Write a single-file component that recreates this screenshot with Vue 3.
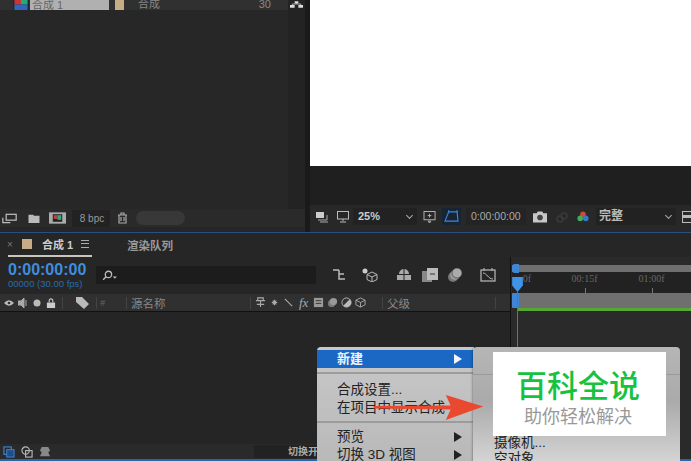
<script setup>
const columnIcons = [
  'M1 4h10M3 4V1h6v3M6 4v7M2 8h8',
  'M6 3v6M3 6h6M4 4l4 4M8 4l-4 4',
  'M2 2l8 8'
]
</script>

<template>
  <div class="app">
    <section class="top">
      <div class="project">
        <div class="project-main">
          <div class="project-list">
            <div class="asset-row">
              <svg class="comp-thumb" viewBox="0 0 14 10"><rect width="14" height="10" fill="#223"/><rect x="1" width="6" height="5" fill="#c33"/><rect x="7" width="6" height="5" fill="#2a7"/><rect x="1" y="5" width="12" height="5" fill="#36b"/></svg>
              <span class="asset-name">合成 1</span>
              <span class="swatch small"></span>
              <span class="asset-type">合成</span>
              <span class="asset-num">30</span>
            </div>
          </div>
          <div class="project-side">
            <svg class="flow" viewBox="0 0 14 8"><path d="M5 1h4v2.500H5zM0 5h5v3H0zM9 5h5v3H9z" fill="#ddd"/><path d="M2.500 5V4h9v1M7 3.500V4" stroke="#ddd" stroke-width=".8" fill="none"/></svg>
          </div>
        </div>
        <div class="project-foot">
          <svg class="foot-icon" viewBox="0 0 18 12"><rect x="5" y="1" width="12" height="7" fill="none" stroke="#bbb" stroke-width="1.500"/><path d="M1 5v6h9" fill="none" stroke="#bbb" stroke-width="1.500"/></svg>
          <svg class="foot-icon folder" viewBox="0 0 14 12"><path d="M1 2h5l1 1h6v8H1z" fill="#bbb"/></svg>
          <svg class="foot-icon wide" viewBox="0 0 18 12"><rect width="18" height="12" fill="#aaa"/><rect x="4" y="2" width="10" height="8" fill="#222"/><rect x="5" y="3" width="4" height="4" fill="#b44"/><rect x="9" y="3" width="4" height="5" fill="#3a7"/></svg>
          <span class="bpc">8 bpc</span>
          <svg class="trash" viewBox="0 0 11 12"><path d="M1 3h9M4 3V1h3v2M2 3v8h7V3M4 5v4M7 5v4" fill="none" stroke="#aaa" stroke-width="1.200"/></svg>
          <span class="pill"></span>
        </div>
      </div>
      <div class="viewer">
        <div class="canvas"></div>
        <div class="viewer-gap"></div>
        <div class="viewer-bar">
          <svg class="vb-icon first" viewBox="0 0 14 12"><rect x="1" y="1" width="8" height="6" fill="#ccc"/><path d="M3 9h9V4M5 11h8" stroke="#aaa" fill="none"/></svg>
          <svg class="vb-icon monitor" viewBox="0 0 14 12"><rect x="1.500" y=".5" width="11" height="7.500" fill="none" stroke="#bbb"/><path d="M7 8v2M4 11h6" stroke="#bbb"/></svg>
          <span class="zoom-select">25%<i class="chev"></i></span>
          <svg class="vb-icon region" viewBox="0 0 14 13"><rect x=".5" y=".5" width="12" height="9" fill="none" stroke="#bbb"/><path d="M6.500 3v4M4.500 5h4M5 11h3l-1.500 2z" stroke="#bbb" fill="none"/></svg>
          <span class="mask-btn"><svg viewBox="0 0 16 14"><path d="M5 2h9l1 10H1z" fill="none" stroke="#3f86d8" stroke-width="1.200"/><path d="M5 0v3M14 0v3" stroke="#3f86d8"/></svg></span>
          <span class="timecode">0:00:00:00</span>
          <svg class="vb-icon camera" viewBox="0 0 15 12"><path d="M0 2h4l1-2h5l1 2h4v10H0z" fill="#c8c8c8"/><circle cx="7.500" cy="6.500" r="3" fill="#444"/></svg>
          <svg class="vb-icon glasses" viewBox="0 0 14 12"><circle cx="5" cy="8" r="3" fill="none" stroke="#3a3a3a" stroke-width="1.500"/><circle cx="9" cy="5" r="3" fill="none" stroke="#3a3a3a" stroke-width="1.500"/></svg>
          <svg class="vb-icon colors" viewBox="0 0 14 13"><circle cx="7" cy="3.500" r="3" fill="#d04a3a"/><circle cx="4" cy="8" r="3" fill="#3fae5a"/><circle cx="10" cy="8" r="3" fill="#3a78d0"/></svg>
          <span class="quality">完整<i class="chev"></i></span>
          <span class="cut-icon"></span>
        </div>
      </div>
    </section>

    <div class="divider"></div>

    <section class="timeline">
      <div class="tabs">
        <div class="tab active">
          <span class="close">×</span>
          <span class="swatch"></span>
          <span class="tab-title">合成 1</span>
          <span class="burger"></span>
        </div>
        <div class="tab queue">渲染队列</div>
      </div>

      <div class="tl-body">
        <div class="tl-left">
          <div class="controls">
            <div class="time">
              <div class="time-main">0:00:00:00</div>
              <div class="time-sub">00000 (30.00 fps)</div>
            </div>
            <div class="search">
              <svg viewBox="0 0 16 10"><circle cx="7" cy="4" r="3" fill="none" stroke="#bbb" stroke-width="1.200"/><path d="M5 6l-3 3" stroke="#bbb" stroke-width="1.300"/><path d="M11 6h4l-2 2z" fill="#bbb"/></svg>
            </div>
            <div class="tools">
              <svg viewBox="0 0 16 14"><path d="M1 2h6M7 2v9h6M7 6h5" fill="none" stroke="#bbb" stroke-width="1.500"/></svg>
              <svg viewBox="0 0 16 14"><circle cx="3" cy="3" r="2.500" fill="#ccc"/><path d="M10 4l5 2.500v5L10 14l-5-2.500v-5zM5 6.500l5 2.500 5-2.500M10 9v5" fill="none" stroke="#bbb"/></svg>
              <svg viewBox="0 0 16 14"><path d="M3 6a5 5 0 0 1 10 0zM1 7h14v5H1z" fill="#aaa"/><path d="M8 1v11" stroke="#222"/></svg>
              <svg viewBox="0 0 16 14"><rect y="3" width="10" height="11" fill="#888"/><rect x="5" width="11" height="12" fill="#bbb"/><path d="M8 6h5" stroke="#333"/></svg>
              <svg viewBox="0 0 16 14"><circle cx="6" cy="9" r="5" fill="#777"/><circle cx="8" cy="7" r="5" fill="#999"/><circle cx="10" cy="5" r="5" fill="#aaa" stroke="#333" stroke-width=".6"/></svg>
              <svg viewBox="0 0 16 14"><rect x="1" y="2" width="14" height="11" fill="none" stroke="#bbb" stroke-width="1.200"/><path d="M4 0v3M12 0v3M3 5c4 0 5 6 10 6" fill="none" stroke="#bbb"/></svg>
            </div>
          </div>
          <div class="col-head">
            <span class="head-icons">
              <svg viewBox="0 0 11 8"><path d="M0 4q5.500-6 11 0q-5.500 6-11 0z" fill="#bbb"/><circle cx="5.500" cy="4" r="1.500" fill="#333"/></svg>
              <svg viewBox="0 0 10 10"><path d="M0 3h3l3-3v10L3 7H0zM8 2v6" fill="#aaa" stroke="#aaa"/></svg>
              <svg viewBox="0 0 10 10"><circle cx="5" cy="5" r="3.500" fill="#bbb"/></svg>
              <svg viewBox="0 0 9 11"><path d="M2.500 5V3a2 2 0 0 1 4 0v2" fill="none" stroke="#ccc" stroke-width="1.200"/><rect y="5" width="9" height="6" fill="#ccc"/></svg>
            </span>
            <span class="sep"></span>
            <span class="tag-cell"><svg viewBox="0 0 13 12"><path d="M0 0h6l7 7-5 5-8-7z" fill="#bbb"/></svg></span>
            <span class="sep"></span>
            <span class="hash">#</span>
            <span class="sep"></span>
            <span class="col-name">源名称</span>
            <span class="sep"></span>
            <span class="switches">
              <svg v-for="(d, i) in columnIcons" :key="i" viewBox="0 0 12 12"><path :d="d" fill="none" stroke="#aaa" stroke-width="1.200"/></svg>
              <em>fx</em>
              <svg viewBox="0 0 12 12"><rect x="1" y="1" width="10" height="10" fill="#999"/><path d="M3 4h6M3 7h6" stroke="#333"/></svg>
              <svg viewBox="0 0 12 12"><circle cx="5" cy="7" r="4" fill="#777"/><circle cx="7" cy="5" r="4" fill="#999"/></svg>
              <svg viewBox="0 0 12 12"><circle cx="6" cy="6" r="5" fill="#333" stroke="#bbb"/><path d="M6 1a5 5 0 0 1 0 10z" fill="#bbb" transform="rotate(45 6 6)"/></svg>
              <svg viewBox="0 0 12 12"><path d="M6 1l5 2.500v5L6 11 1 8.500v-5zM1 3.500L6 6l5-2.500M6 6v5" fill="none" stroke="#aaa"/></svg>
            </span>
            <span class="sep"></span>
            <span class="parent">父级</span>
            <span class="sep"></span>
            <span></span>
          </div>
          <div class="layers"></div>
          <div class="tl-foot">
            <svg viewBox="0 0 13 13"><rect x="1" y="1" width="8" height="8" fill="none" stroke="#3f86d8" stroke-width="1.200"/><rect x="4" y="4" width="8" height="8" fill="#1d4f86" stroke="#3f86d8"/></svg>
            <svg viewBox="0 0 13 13"><circle cx="5" cy="5" r="4" fill="none" stroke="#bbb" stroke-width="1.200"/><rect x="5" y="5" width="7" height="7" fill="none" stroke="#bbb" stroke-width="1.200"/></svg>
            <svg viewBox="0 0 13 13"><path d="M3 1h7l2 4-2 2 2 4H1l2-4-2-2z" fill="#888"/></svg>
            <span class="switch-mode">切换开</span>
          </div>
        </div>
        <div class="tl-right">
          <div class="range"><span class="range-handle"></span></div>
          <div class="ruler">
            <span class="tick first">0f</span>
            <span class="tick second">00:15f</span>
            <span class="tick">01:00f</span>
          </div>
          <div class="work"><span class="work-handle"></span></div>
          <div class="green"></div>
          <div class="track"></div>
          <svg class="head" viewBox="0 0 10 14"><path d="M0 0h10v8l-5 6-5-6z" fill="#3f93e8"/></svg>
          <span class="head-line"></span>
        </div>
      </div>
    </section>

    <div class="bottom-line"></div>

    <div class="menu">
      <div class="item selected">新建<i class="arrow white"></i></div>
      <div class="rule first-rule"></div>
      <div class="item">合成设置...</div>
      <div class="item">在项目中显示合成</div>
      <div class="rule"></div>
      <div class="item">预览<i class="arrow"></i></div>
      <div class="item">切换 3D 视图<i class="arrow"></i></div>
    </div>
    <div class="submenu">
      <div class="sub-rule"></div>
      <div class="sub-item first">摄像机...</div>
      <div class="sub-item">空对象</div>
    </div>
    <div class="brand">
      <div class="brand-title">百科全说</div>
      <div class="brand-sub">助你轻松解决</div>
    </div>
    <svg class="pointer" viewBox="0 0 114 26"><path d="M0 11.500L80 11 75 0l39 12-39 14 5-11L0 14z" fill="#e8492f"/></svg>
  </div>
</template>

<style>
html, body { margin: 0; background: #202020; }
</style>

<style scoped>
.app {
  position: relative;
  width: 691px;
  height: 461px;
  overflow: hidden;
  display: flex;
  flex-direction: column;
  background: #1c1c1c;
  color: #aaa;
  font-family: "Liberation Sans", "Noto Sans CJK SC", sans-serif;
}
svg { display: block; flex: none; }

.top { height: 232px; flex: none; display: flex; background: #1a1a1a; }
.project { width: 305px; flex: none; display: flex; flex-direction: column; background: #262626; }
.project-main { flex: 1; display: flex; min-height: 0; }
.project-list { flex: 1; background: #272727; }
.asset-row {
  height: 10px;
  display: flex;
  align-items: flex-end;
  background: #303030;
  overflow: hidden;
  font-size: 11px;
  line-height: 12px;
  color: #888;
}
.comp-thumb { width: 16px; height: 11px; margin-left: 13px; }
.asset-name { width: 79px; height: 11px; margin-left: 1px; padding-left: 2px; box-sizing: border-box; background: #b0b0b0; color: #666; white-space: nowrap; }
.swatch { width: 10px; height: 10px; background: #c7ad87; display: block; flex: none; }
.swatch.small { margin-left: 6px; width: 9px; }
.asset-type { margin-left: 14px; }
.asset-num { margin-left: auto; margin-right: 17px; }
.project-side { width: 17px; background: #232323; }
.flow { width: 13px; height: 8px; margin: 0 0 0 2px; }
.project-foot { height: 18px; margin-bottom: 5px; display: flex; align-items: center; background: #2a2a2a; padding-left: 2px; }
.foot-icon { width: 15px; height: 11px; }
.foot-icon.folder { width: 14px; margin-left: 10px; }
.foot-icon.wide { width: 17px; margin-left: 8px; height: 12px; }
.bpc { width: 38px; margin-left: 6px; padding-left: 2px; box-sizing: border-box; text-align: center; font-size: 10px; line-height: 17px; background: #222; color: #999; }
.trash { width: 11px; height: 12px; margin-left: 7px; }
.pill { width: 49px; height: 14px; margin-left: 8px; border-radius: 7px; background: #383838; }

.viewer { flex: 1; display: flex; flex-direction: column; margin-left: 5px; min-width: 0; background: #232323; }
.canvas { height: 166px; flex: none; background: #fff; }
.viewer-gap { height: 39px; flex: none; background: #1f1f1f; }
.viewer-bar { flex: 1; display: flex; align-items: center; background: #282828; padding: 0 0 4px 5px; overflow: hidden; font-size: 11px; }
.vb-icon { width: 14px; height: 12px; }
.vb-icon.monitor { margin-left: 7px; }
.zoom-select { width: 64px; height: 17px; margin-left: 3px; padding-left: 5px; box-sizing: border-box; flex: none; background: #222; color: #ccc; line-height: 17px; font-weight: 700; position: relative; }
.chev { position: absolute; right: 5px; top: 5px; width: 4px; height: 4px; border-right: 1px solid #aaa; border-bottom: 1px solid #aaa; transform: rotate(45deg); }
.vb-icon.region { margin-left: 6px; }
.mask-btn { width: 19px; height: 17px; margin-left: 5px; flex: none; display: flex; align-items: center; justify-content: center; background: #172434; }
.mask-btn svg { width: 15px; height: 13px; }
.timecode { width: 60px; margin-left: 5px; padding-left: 5px; box-sizing: border-box; flex: none; color: #aaa; line-height: 17px; background: #242424; font-size: 10.500px; white-space: nowrap; }
.vb-icon.camera { margin-left: 7px; }
.vb-icon.glasses { margin-left: 8px; }
.vb-icon.colors { margin-left: 7px; }
.quality { width: 80px; height: 17px; margin-left: 6px; padding-left: 3px; box-sizing: border-box; position: relative; flex: none; background: #222; color: #bbb; line-height: 17px; font-size: 12px; font-weight: 700; }
.cut-icon { width: 9px; height: 10px; margin-left: 6px; flex: none; border: 1px solid #bbb; background: linear-gradient(#2a2a2a 30%, #bbb 30%, #bbb 60%, #2a2a2a 60%); }

.divider { height: 1px; flex: none; background: #2a4f82; }
.timeline { flex: 1; min-height: 0; display: flex; flex-direction: column; background: #262626; }
.tabs { height: 24px; flex: none; display: flex; font-size: 11px; }
.tab { display: flex; align-items: center; height: 24px; box-sizing: border-box; }
.tab.active { width: 84px; margin-left: 8px; border-bottom: 2px solid #c9c5ba; color: #ccc; font-weight: 700; }
.close { font-size: 10px; color: #777; font-weight: 400; margin-left: -1px; width: 15px; }
.tab-title { margin: 0 8px 0 10px; white-space: nowrap; }
.burger { width: 8px; height: 6px; border-top: 1px solid #aaa; border-bottom: 1px solid #aaa; position: relative; }
.burger::after { content: ""; position: absolute; left: 0; right: 0; top: 2px; height: 1px; background: #aaa; }
.queue { margin-left: 35px; color: #999; font-size: 11.500px; font-weight: 700; }

.tl-body { flex: 1; min-height: 0; display: flex; }
.tl-left { width: 510px; flex: none; display: flex; flex-direction: column; }
.controls { height: 37px; flex: none; display: flex; align-items: flex-start; }
.time { width: 96px; flex: none; padding: 5px 0 0 8px; box-sizing: border-box; white-space: nowrap; }
.time-main { color: #3f8ddc; font-size: 16px; line-height: 16px; font-weight: 700; }
.time-sub { color: #2a6bb0; font-size: 9.500px; line-height: 11px; }
.search { width: 220px; height: 18px; margin-top: 9px; flex: none; display: flex; align-items: center; padding-left: 5px; box-sizing: border-box; background: #1c1c1c; }
.search svg { width: 17px; height: 11px; }
.tools { display: flex; align-items: center; margin-top: 9px; margin-left: 16px; height: 18px; }
.tools svg { width: 16px; height: 14px; }
.tools svg:nth-child(2) { margin-left: 14px; }
.tools svg:nth-child(3) { margin-left: 18px; }
.tools svg:nth-child(4) { margin-left: 10px; }
.tools svg:nth-child(5) { margin-left: 9px; }
.tools svg:nth-child(6) { margin-left: 17px; }
.col-head {
  height: 17px;
  box-sizing: content-box;
  flex: none;
  display: grid;
  grid-template-columns: 62px 1px 33px 1px 29px 1px 123px 1px 131px 1px 112px 1px 1fr;
  align-items: center;
  background: #303030;
  border-bottom: 1px solid #111;
  font-size: 11.500px;
  color: #888;
}
.head-icons { display: flex; align-items: center; gap: 4px; padding-left: 4px; }
.head-icons svg { width: 10px; height: 10px; }
.sep { height: 12px; background: #444; }
.tag-cell { padding-left: 13px; }
.tag-cell svg { width: 13px; height: 12px; }
.hash { padding-left: 3px; font-style: italic; font-size: 9px; color: #666; }
.col-name { padding-left: 4px; white-space: nowrap; }
.switches { display: flex; align-items: center; gap: 3px; padding-left: 4px; }
.switches svg { width: 11px; height: 11px; }
.switches em { font-family: "Liberation Serif", serif; color: #aaa; font-size: 13px; margin-left: 2px; width: 11px; }
.parent { padding-left: 4px; white-space: nowrap; }
.layers { flex: 1; background: #252525; }
.tl-foot { height: 15px; flex: none; display: flex; align-items: center; gap: 6px; padding-left: 3px; background: #2a2a2a; font-size: 10px; color: #aaa; }
.tl-foot svg { width: 12px; height: 12px; }
.switch-mode { margin-left: 197px; width: 64px; line-height: 13px; padding-left: 34px; box-sizing: border-box; background: #222; white-space: nowrap; overflow: hidden; font-weight: 700; }

.tl-right { flex: 1; position: relative; min-width: 0; padding-left: 1px; background: #2a2a2a; border-left: 1px solid #111; display: flex; flex-direction: column; }
.range { height: 7px; margin-top: 8px; flex: none; background: #6f6f6f; position: relative; }
.range-handle { position: absolute; left: 0; top: -1px; width: 7px; height: 9px; border-radius: 3px 0 0 3px; background: #3f86d8; }
.ruler { height: 21px; flex: none; display: flex; background: #222; font-family: "Liberation Serif", serif; font-size: 10px; color: #666; }
.tick { width: 67px; padding-top: 1px; text-align: center; position: relative; white-space: nowrap; }
.tick::after { content: ""; position: absolute; left: 50%; bottom: 0; width: 1px; height: 5px; background: #777; }
.tick.first { width: 19px; text-align: right; }
.tick.first::after { display: none; }
.tick.second { margin-left: 20px; }
.work { height: 15px; flex: none; background: #6f6f6f; position: relative; }
.work-handle { position: absolute; left: 0; top: 0; width: 7px; height: 15px; border-radius: 3px 0 0 3px; background: #3f86d8; }
.green { height: 3px; margin-left: 6px; flex: none; background: #57a832; }
.track { flex: 1; background: #2a2a2a; }
.head { position: absolute; left: 1px; top: 20px; width: 11px; height: 15px; }
.head-line { position: absolute; left: 6px; top: 35px; bottom: 0; width: 1px; background: #2f7fd6; }

.bottom-line { height: 2px; flex: none; background: #2566b0; }

.menu, .submenu {
  position: absolute;
  top: 347px;
  height: 120px;
  box-sizing: border-box;
  color: #222;
  font-size: 13.500px;
}
.menu { left: 317px; width: 157px; padding-top: 3px; border-radius: 4px 0 0 0; background: linear-gradient(#c8c8c8, #b8b8b8); }
.submenu { left: 473px; width: 207px; border-radius: 4px 4px 0 0; background: linear-gradient(#b6b6b6, #aaa 45%, #d8d8d8); box-shadow: -1px 0 2px rgba(0,0,0,.25); }
.sub-rule { position: absolute; left: 0; right: 0; top: 27px; height: 1px; background: #9a9a9a; }
.item { height: 18px; line-height: 18px; padding-left: 20px; position: relative; color: #222; white-space: nowrap; }
.item.selected { background: #1a68c4; color: #eef3fa; font-weight: 700; font-size: 13px; }
.rule { height: 2px; margin: 4px 0 5px; background: #9c9c9c; }
.rule.first-rule { margin: 4px 0 7px; }
.arrow { position: absolute; right: 12px; top: 4px; border-left: 8px solid #222; border-top: 5px solid transparent; border-bottom: 5px solid transparent; }
.arrow.white { border-left-color: #f2f5fa; }
.sub-item { height: 16px; line-height: 16px; padding-left: 21px; color: #222; white-space: nowrap; }
.sub-item.first { margin-top: 88px; }
.brand { position: absolute; left: 493px; top: 352px; width: 173px; height: 84px; padding-right: 3px; box-sizing: border-box; background: #fff; text-align: center; }
.brand-title { margin-top: 17px; font-size: 31px; line-height: 36px; font-weight: 500; color: #16c23f; white-space: nowrap; }
.brand-sub { font-size: 18px; line-height: 22px; color: #999; white-space: nowrap; margin-top: 1px; }
.pointer { position: absolute; left: 372px; top: 395px; width: 113px; height: 25px; }
</style>
